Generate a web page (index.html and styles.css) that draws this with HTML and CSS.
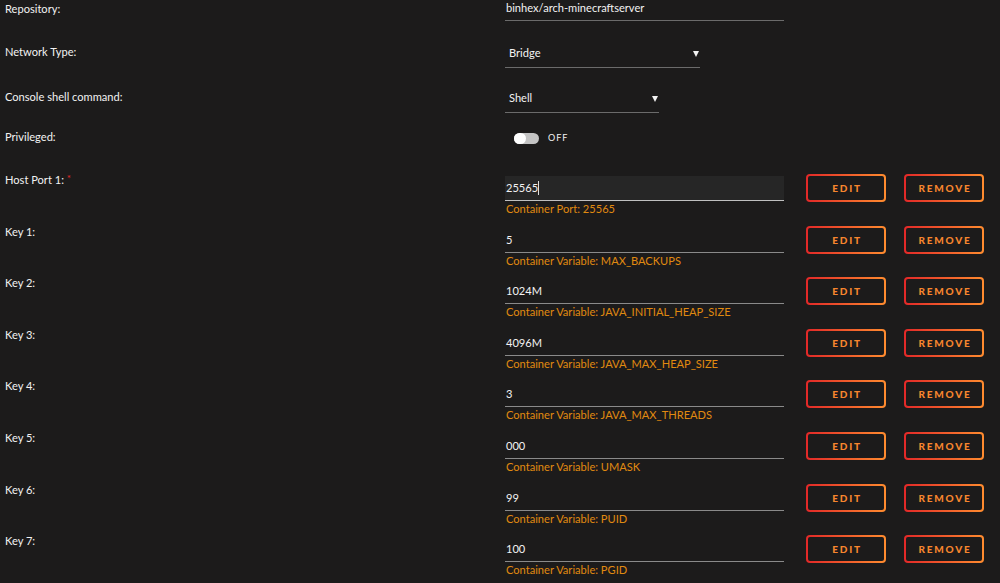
FILE: index.html
```html
<!DOCTYPE html>
<html lang="en">
<head>
  <meta charset="UTF-8">
  <title>Update Container</title>
  <link rel="stylesheet" href="styles.css">
</head>
<body>
  <div class="form">
    <div class="row row-repo">
      <div class="label">Repository:</div>
      <div class="field field-wide">binhex/arch-minecraftserver</div>
    </div>

    <div class="row row-net">
      <div class="label">Network Type:</div>
      <div class="field select select-net">Bridge<span class="arrow"></span></div>
    </div>

    <div class="row row-shell">
      <div class="label">Console shell command:</div>
      <div class="field select select-shell">Shell<span class="arrow"></span></div>
    </div>

    <div class="row row-priv">
      <div class="label">Privileged:</div>
      <div class="switch">
        <span class="track"><span class="knob"></span></span>
        <span class="switch-text">OFF</span>
      </div>
    </div>

    <div class="row config">
      <div class="label">Host Port 1: <span class="required">*</span></div>
      <div class="control">
        <div class="field field-wide focused">25565<span class="caret"></span></div>
        <div class="helper">Container Port: 25565</div>
      </div>
      <button class="btn btn-edit">Edit</button>
      <button class="btn btn-remove">Remove</button>
    </div>

    <div class="row config">
      <div class="label">Key 1:</div>
      <div class="control">
        <div class="field field-wide">5</div>
        <div class="helper">Container Variable: MAX_BACKUPS</div>
      </div>
      <button class="btn btn-edit">Edit</button>
      <button class="btn btn-remove">Remove</button>
    </div>

    <div class="row config">
      <div class="label">Key 2:</div>
      <div class="control">
        <div class="field field-wide">1024M</div>
        <div class="helper">Container Variable: JAVA_INITIAL_HEAP_SIZE</div>
      </div>
      <button class="btn btn-edit">Edit</button>
      <button class="btn btn-remove">Remove</button>
    </div>

    <div class="row config">
      <div class="label">Key 3:</div>
      <div class="control">
        <div class="field field-wide">4096M</div>
        <div class="helper">Container Variable: JAVA_MAX_HEAP_SIZE</div>
      </div>
      <button class="btn btn-edit">Edit</button>
      <button class="btn btn-remove">Remove</button>
    </div>

    <div class="row config">
      <div class="label">Key 4:</div>
      <div class="control">
        <div class="field field-wide">3</div>
        <div class="helper">Container Variable: JAVA_MAX_THREADS</div>
      </div>
      <button class="btn btn-edit">Edit</button>
      <button class="btn btn-remove">Remove</button>
    </div>

    <div class="row config">
      <div class="label">Key 5:</div>
      <div class="control">
        <div class="field field-wide">000</div>
        <div class="helper">Container Variable: UMASK</div>
      </div>
      <button class="btn btn-edit">Edit</button>
      <button class="btn btn-remove">Remove</button>
    </div>

    <div class="row config">
      <div class="label">Key 6:</div>
      <div class="control">
        <div class="field field-wide">99</div>
        <div class="helper">Container Variable: PUID</div>
      </div>
      <button class="btn btn-edit">Edit</button>
      <button class="btn btn-remove">Remove</button>
    </div>

    <div class="row config">
      <div class="label">Key 7:</div>
      <div class="control">
        <div class="field field-wide">100</div>
        <div class="helper">Container Variable: PGID</div>
      </div>
      <button class="btn btn-edit">Edit</button>
      <button class="btn btn-remove">Remove</button>
    </div>
  </div>
</body>
</html>
```

FILE: styles.css
```css
html, body {
  margin: 0;
  padding: 0;
  background-color: #1c1b1b;
  overflow: hidden;
}
body {
  font-family: Lato, "Liberation Sans", sans-serif;
  font-size: 11.1px;
  line-height: 14px;
  color: #f2f2f2;
  padding-left: 5px;
}
.row {
  display: flex;
  align-items: flex-start;
}
.row-repo { height: 43px; }
.row-net { height: 45px; }
.row-shell { height: 40px; }
.row-priv { height: 43px; }
.config { height: 51.6px; }

.label {
  width: 500px;
  flex-shrink: 0;
  margin-top: 2px;
}
.required {
  color: #e22828;
  font-size: 10px;
  vertical-align: top;
  position: relative;
  top: -2px;
}

.field {
  box-sizing: border-box;
  padding: 1px 0 5px 1px;
  border-bottom: 1px solid #6b6b6b;
  position: relative;
}
.field-wide { width: 279px; }
.select {
  margin-top: 2px;
  padding-bottom: 7px;
  padding-left: 4px;
}
.select-net { width: 195px; }
.select-shell { width: 154px; }
.arrow {
  position: absolute;
  top: 6px;
  right: 1px;
  width: 0;
  height: 0;
  border-left: 3px solid transparent;
  border-right: 3px solid transparent;
  border-top: 6px solid #f2f2f2;
}

.switch {
  display: flex;
  align-items: center;
  margin-top: 3px;
  margin-left: 9px;
}
.track {
  display: block;
  width: 25px;
  height: 11px;
  border-radius: 6px;
  background-color: #c4c4c4;
  position: relative;
}
.knob {
  position: absolute;
  left: 0;
  top: 0;
  width: 12px;
  height: 11px;
  border-radius: 6px;
  background-color: #ffffff;
}
.switch-text {
  margin-left: 9px;
  font-size: 9px;
  letter-spacing: 1px;
}

.control {
  width: 279px;
  flex-shrink: 0;
  margin-top: 5px;
}
.config .field {
  height: 25px;
  padding: 5px 0 5px 1px;
  border-bottom-color: #8a8a8a;
}
.config .field.focused {
  background-color: #262626;
  border-bottom-color: #c0c0c0;
}
.caret {
  display: inline-block;
  width: 1px;
  height: 14px;
  background-color: #e0e0e0;
  vertical-align: top;
}
.helper {
  margin-top: 1px;
  padding-left: 1px;
  color: #e08a10;
}

.btn {
  box-sizing: border-box;
  width: 80px;
  height: 28px;
  margin-top: 3px;
  margin-left: 22px;
  padding: 0 0 0 2px;
  border: 2px solid transparent;
  border-radius: 4px;
  background: linear-gradient(#1c1b1b, #1c1b1b) padding-box,
              linear-gradient(90deg, #e22828, #ff8c2f) border-box;
  color: #f7862e;
  font-family: Lato, "Liberation Sans", sans-serif;
  font-size: 10px;
  font-weight: 900;
  letter-spacing: 1.8px;
  text-transform: uppercase;
}
.btn-remove { margin-left: 18px; }
```
